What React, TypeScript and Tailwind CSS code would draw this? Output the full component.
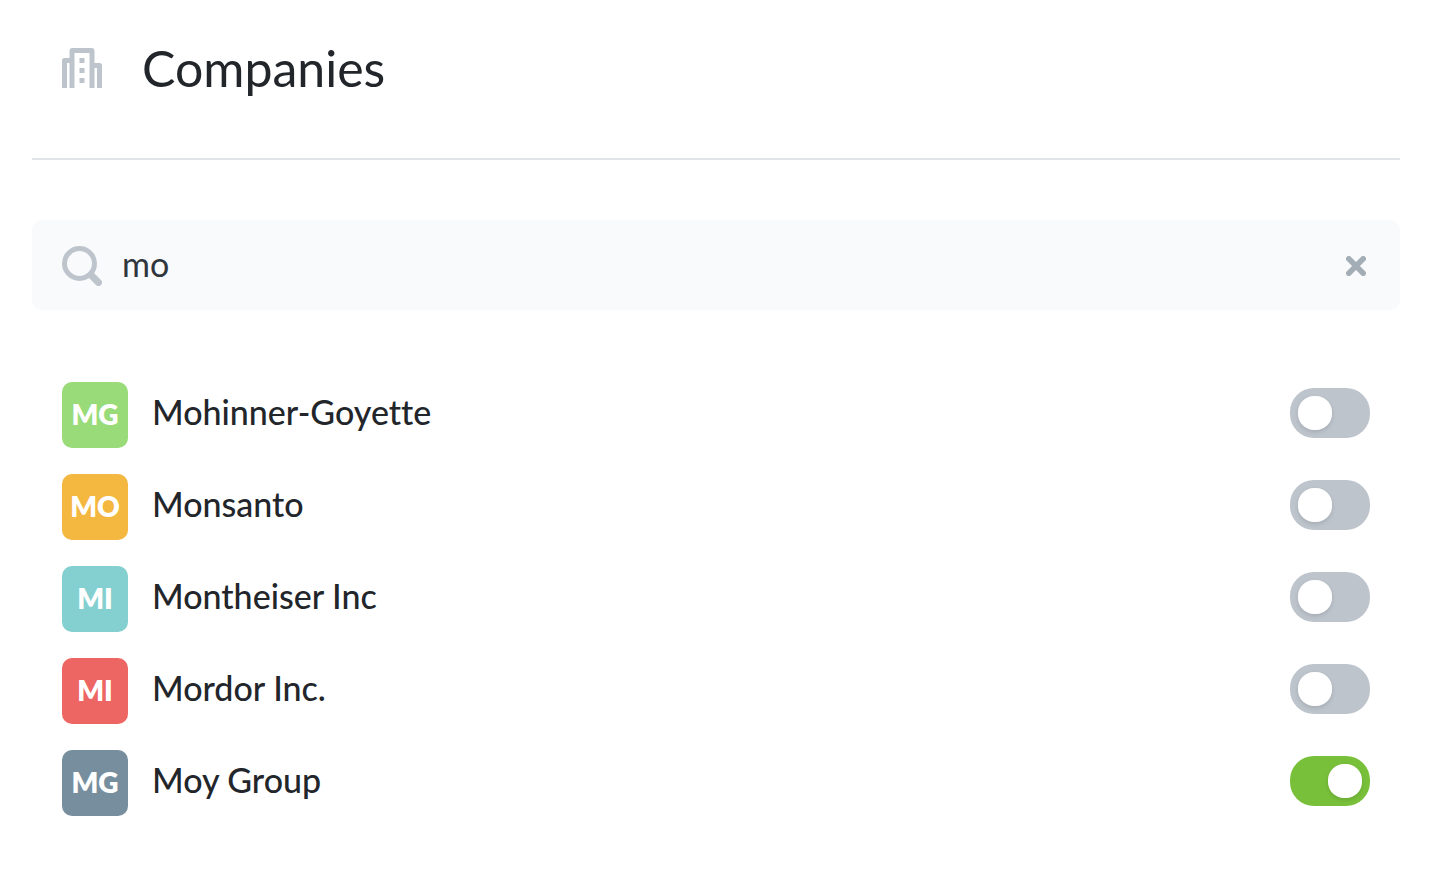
import React, { useState } from 'react';

type Company = {
  id: string;
  initials: string;
  name: string;
  color: string;
  enabled: boolean;
};

const initialCompanies: Company[] = [
  { id: 'mohinner-goyette', initials: 'MG', name: 'Mohinner-Goyette', color: 'bg-[#98db78]', enabled: false },
  { id: 'monsanto', initials: 'MO', name: 'Monsanto', color: 'bg-[#f4b740]', enabled: false },
  { id: 'montheiser', initials: 'MI', name: 'Montheiser Inc', color: 'bg-[#84cfcf]', enabled: false },
  { id: 'mordor', initials: 'MI', name: 'Mordor Inc.', color: 'bg-[#ed6663]', enabled: false },
  { id: 'moy-group', initials: 'MG', name: 'Moy Group', color: 'bg-[#768e9d]', enabled: true },
];

const BuildingIcon = () => (
  <svg className="size-10 shrink-0 text-[#bdc4cc]" viewBox="0 0 40 40" fill="currentColor" aria-hidden="true">
    <path d="M7.5 40V3a3 3 0 0 1 3-3h19a3 3 0 0 1 3 3v37h-5V5h-15v35z" />
    <path d="M0 40V12.500a2.500 2.500 0 0 1 2.500-2.500H8v5H5v25z" />
    <path d="M40 40V17.500a2.500 2.500 0 0 0-2.500-2.500H32v5h3v20z" />
    <path d="M17.500 10h5v5h-5zM17.500 20h5v5h-5zM17.500 30h5v5h-5z" />
  </svg>
);

const SearchIcon = () => (
  <svg className="size-10 shrink-0 text-[#bdc4cc]" viewBox="0 0 40 40" fill="none" stroke="currentColor" aria-hidden="true">
    <circle cx="17.5" cy="17.5" r="15" strokeWidth="5" />
    <path d="M29 29l7.500 7.500" strokeWidth="7" strokeLinecap="round" />
  </svg>
);

const ClearIcon = () => (
  <svg className="size-5" viewBox="0 0 20 20" fill="none" stroke="currentColor" strokeWidth="5.500" strokeLinecap="round" aria-hidden="true">
    <path d="M2.800 2.800l14.400 14.400M17.200 2.800L2.800 17.200" />
  </svg>
);

const CompanyRow: React.FC<{ company: Company; onToggle: () => void }> = ({ company, onToggle }) => (
  <li className="flex items-start">
    <span className={`flex size-[66px] shrink-0 items-center justify-center rounded-[10px] pb-0.5 text-[28px] font-extrabold text-white ${company.color}`}>
      {company.initials}
    </span>
    <label htmlFor={company.id} className="ml-6 flex-1 text-[34px] leading-[60px] font-medium">
      {company.name}
    </label>
    <input
      id={company.id}
      type="checkbox"
      role="switch"
      checked={company.enabled}
      onChange={onToggle}
      className="mt-1.5 h-[50px] w-20 shrink-0 cursor-pointer appearance-none rounded-3xl bg-[#bdc4cc] p-2 transition-colors before:block before:size-[34px] before:rounded-2xl before:bg-white before:shadow-[0_2px_4px_rgba(0,0,0,0.12)] before:transition-transform checked:bg-[#78c03a] checked:before:translate-x-[30px]"
    />
  </li>
);

export default function App() {
  const [query, setQuery] = useState('mo');
  const [companies, setCompanies] = useState(initialCompanies);

  const toggle = (id: string) => {
    setCompanies(list => list.map(c => (c.id === id ? { ...c, enabled: !c.enabled } : c)));
  };

  const visible = companies.filter(c => c.name.toLowerCase().includes(query.toLowerCase()));

  return (
    <main className="min-h-screen bg-white pr-[34px] pb-14 pl-8 font-['Lato',sans-serif] text-[#22262b] [font-variant-ligatures:none]">
      <header className="flex items-center gap-10 border-b-2 border-[#e1e5e9] px-[30px] pt-8 pb-[54px]">
        <BuildingIcon />
        <h1 className="text-[50px] leading-[72px] font-normal">Companies</h1>
      </header>

      <div className="mt-[60px] flex h-[90px] items-center gap-5 rounded-[10px] bg-[#f9fafc] px-[30px] pt-0.5">
        <SearchIcon />
        <input
          type="text"
          aria-label="Search companies"
          value={query}
          onChange={e => setQuery(e.target.value)}
          className="min-w-0 flex-1 bg-transparent pb-1.5 text-[34px] text-[#30363c] outline-none"
        />
        <button type="button" aria-label="Clear search" onClick={() => setQuery('')} className="p-1 text-[#a3adb5]">
          <ClearIcon />
        </button>
      </div>

      <ul className="mt-[72px] flex flex-col gap-[26px] px-[30px]">
        {visible.map(company => (
          <CompanyRow key={company.id} company={company} onToggle={() => toggle(company.id)} />
        ))}
      </ul>
    </main>
  );
}
